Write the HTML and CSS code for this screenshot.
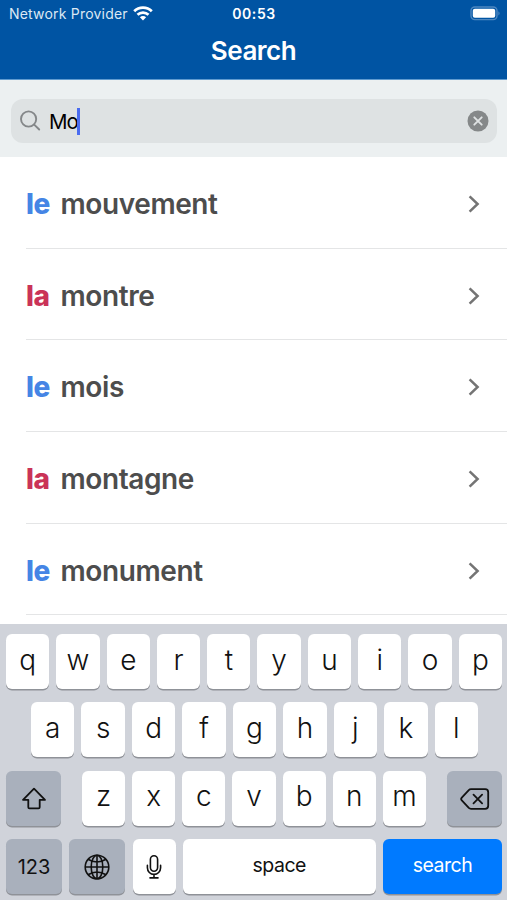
FILE: index.html
```html
<!DOCTYPE html>
<html lang="en">
<head>
  <meta charset="UTF-8" />
  <meta name="viewport" content="width=device-width, initial-scale=1.0" />
  <title>Search</title>
  <link rel="stylesheet" href="styles.css">
</head>
<body>
  <header>
    <div class="status">
      <div class="carrier">
        <span>Network Provider</span>
        <svg width="20" height="15" viewBox="0 0 20 15">
          <g fill="none" stroke="#fff" stroke-width="2.7">
            <path d="M1.2 5.3a12.4 12.4 0 0 1 17.6 0" />
            <path d="M4.5 8.8a7.8 7.8 0 0 1 11 0" />
          </g>
          <path d="M10 14.4L6.9 11.3a4.4 4.4 0 0 1 6.2 0z" fill="#fff" />
        </svg>
      </div>
      <div class="time">00:53</div>
      <div class="battery">
        <svg width="32" height="15" viewBox="0 0 32 15">
          <rect x="1" y="1" width="26" height="12.6" rx="3.8" fill="none" stroke="#4d87c0" stroke-width="1.4" />
          <rect x="2.8" y="2.8" width="22.4" height="9" rx="2" fill="#fff" />
          <path d="M28.4 5.2q2.4 2.1 0 4.2z" fill="#4d87c0" />
        </svg>
      </div>
    </div>
    <h1>Search</h1>
  </header>

  <div class="searchbar">
    <div class="field">
      <svg class="lupa" width="22" height="22" viewBox="0 0 22 22" fill="none" stroke="#848789" stroke-width="1.9" stroke-linecap="round">
        <circle cx="8.6" cy="9" r="7.6" />
        <path d="M14.2 14.6l5 4.9" />
      </svg>
      <span class="query">Mo</span><span class="cursor"></span>
      <svg class="clear" width="22" height="22" viewBox="0 0 22 22">
        <circle cx="11" cy="11" r="10.5" fill="#858889" />
        <path d="M7.3 7.3l7.4 7.4M14.7 7.3l-7.4 7.4" stroke="#dfe2e3" stroke-width="1.9" stroke-linecap="round" />
      </svg>
    </div>
  </div>

  <ul class="results">
    <li><b class="le">le</b><span>mouvement</span><svg viewBox="0 0 12 18"><path d="M1.6 1.4L9.6 9l-8 7.6" /></svg></li>
    <li><b class="la">la</b><span>montre</span><svg viewBox="0 0 12 18"><path d="M1.6 1.4L9.6 9l-8 7.6" /></svg></li>
    <li><b class="le">le</b><span>mois</span><svg viewBox="0 0 12 18"><path d="M1.6 1.4L9.6 9l-8 7.6" /></svg></li>
    <li><b class="la">la</b><span>montagne</span><svg viewBox="0 0 12 18"><path d="M1.6 1.4L9.6 9l-8 7.6" /></svg></li>
    <li><b class="le">le</b><span>monument</span><svg viewBox="0 0 12 18"><path d="M1.6 1.4L9.6 9l-8 7.6" /></svg></li>
  </ul>

  <div class="keyboard">
    <div class="row">
      <button>q</button><button>w</button><button>e</button><button>r</button><button>t</button><button>y</button><button>u</button><button>i</button><button>o</button><button>p</button>
    </div>
    <div class="row middle">
      <button>a</button><button>s</button><button>d</button><button>f</button><button>g</button><button>h</button><button>j</button><button>k</button><button>l</button>
    </div>
    <div class="row third">
      <button class="dark shift">
        <svg width="26" height="24" viewBox="0 0 26 24" fill="none" stroke="#111" stroke-width="1.8" stroke-linejoin="round">
          <path d="M13 1.6L24 12.8h-5.3v7.4q0 1.2-1.2 1.2h-9q-1.2 0-1.2-1.2v-7.4H2z" />
        </svg>
      </button>
      <div class="letters">
        <button>z</button><button>x</button><button>c</button><button>v</button><button>b</button><button>n</button><button>m</button>
      </div>
      <button class="dark delete">
        <svg width="30" height="22" viewBox="0 0 30 22" fill="none" stroke="#111" stroke-width="1.8" stroke-linejoin="round" stroke-linecap="round">
          <path d="M11 1.2h14.2q3 0 3 3v13.6q0 3-3 3H11q-1.3 0-2.2-.9L1.8 12.4q-1.3-1.4 0-2.8l7-7.5q.9-.9 2.2-.9z" />
          <path d="M13.5 6.7l8.6 8.6M22.1 6.7l-8.6 8.6" />
        </svg>
      </button>
    </div>
    <div class="row bottom">
      <button class="dark">123</button>
      <button class="dark">
        <svg width="26" height="26" viewBox="0 0 26 26" fill="none" stroke="#111" stroke-width="1.6">
          <circle cx="13" cy="13" r="11.8" />
          <ellipse cx="13" cy="13" rx="5.8" ry="11.8" />
          <path d="M13 1v24M1 13h24M4 5.3q9 5.4 18 0M4 20.7q9-5.4 18 0" />
        </svg>
      </button>
      <button>
        <svg width="16" height="26" viewBox="0 0 16 26" fill="none" stroke="#111" stroke-width="1.6" stroke-linecap="round">
          <rect x="4.4" y="1.8" width="7.2" height="15.4" rx="3.6" />
          <path d="M1.4 11.4v2.4a6.6 6.6 0 0 0 13.2 0v-2.4M8 20.4v3.4M4 23.9h8" />
        </svg>
      </button>
      <button class="space">space</button>
      <button class="go">search</button>
    </div>
  </div>
</body>
</html>
```

FILE: styles.css
```css
* { box-sizing: border-box; }
body {
  margin: 0;
  height: 900px;
  display: flex;
  flex-direction: column;
  overflow: hidden;
  background: white;
  font-family: Inter, "Liberation Sans", sans-serif;
}
header {
  height: 80px;
  background: #0054a3;
  border-bottom: 1px solid #5f9bd0;
  color: white;
}
.status {
  height: 27px;
  display: grid;
  grid-template-columns: 1fr auto 1fr;
  align-items: center;
  padding: 0 5px 0 9px;
  font-size: 14px;
}
.carrier {
  display: flex;
  align-items: center;
  gap: 5px;
  color: #dce8f4;
  letter-spacing: 0.2px;
  white-space: nowrap;
}
.time {
  margin-right: 3px;
  font-weight: 600;
  letter-spacing: 0.6px;
}
.battery {
  display: flex;
  justify-content: flex-end;
}
h1 {
  margin: 0;
  font-size: 26px;
  line-height: 47px;
  font-weight: 600;
  letter-spacing: -0.5px;
  text-align: center;
}
.searchbar {
  height: 77px;
  padding: 19px 10px 0 11px;
  background: #ecf0f1;
}
.field {
  height: 44px;
  display: flex;
  align-items: center;
  padding: 0 8px 0 9px;
  border-radius: 12px;
  background: #dee2e3;
}
.query {
  margin-left: 7px;
  font-size: 20.5px;
  letter-spacing: -0.9px;
}
.cursor {
  width: 2.5px;
  height: 27px;
  margin-left: -1px;
  background: #4a6cf0;
}
.clear { margin-left: auto; }
.results {
  list-style: none;
  margin: 0;
  padding: 0 0 0 26px;
  height: 467px;
  overflow: hidden;
}
.results li {
  height: 91.7px;
  display: flex;
  align-items: center;
  border-bottom: 1px solid #e4e5e6;
  padding: 3px 27px 0 0;
  font-size: 28px;
}
.results b {
  width: 34.5px;
  font-weight: 800;
  letter-spacing: -0.5px;
}
.results span {
  font-weight: 600;
  color: #4d4d4d;
  letter-spacing: -0.4px;
}
.results svg {
  width: 12px;
  height: 18px;
  margin-left: auto;
  fill: none;
  stroke: #747474;
  stroke-width: 2.5;
}
.le { color: #4585e5; }
.la { color: #ca3358; }

.keyboard {
  height: 276px;
  padding: 10px 5px 0 6px;
  background: #d0d3da;
  display: flex;
  flex-direction: column;
  gap: 13.4px;
}
.row {
  display: flex;
  gap: 7px;
  height: 55px;
}
button {
  flex: 1 1 0;
  min-width: 0;
  height: 55px;
  display: flex;
  align-items: center;
  justify-content: center;
  padding: 0 0 4px;
  border: none;
  border-radius: 6px;
  background: white;
  box-shadow: 0 1.5px 0 #8f9298;
  color: #111;
  font-family: inherit;
  font-size: 28px;
  font-weight: 350;
}
.middle { padding: 0 24px 0 25px; }
.third { justify-content: space-between; }
.shift, .delete {
  flex: 0 0 55px;
  padding: 1px 0 0;
}
.letters {
  width: 344px;
  display: flex;
  gap: 7px;
}
.bottom {
  display: grid;
  grid-template-columns: 56px 56px 43px 193px 119px;
  justify-content: space-between;
  gap: 0;
}
.dark { background: #a9b0bc; }
.bottom button {
  padding: 0;
  font-size: 20px;
  font-weight: 400;
}
.bottom .space, .bottom .go {
  padding-bottom: 3px;
  font-size: 19.5px;
  letter-spacing: -0.5px;
}
.bottom .go {
  background: #007aff;
  color: white;
}
```
